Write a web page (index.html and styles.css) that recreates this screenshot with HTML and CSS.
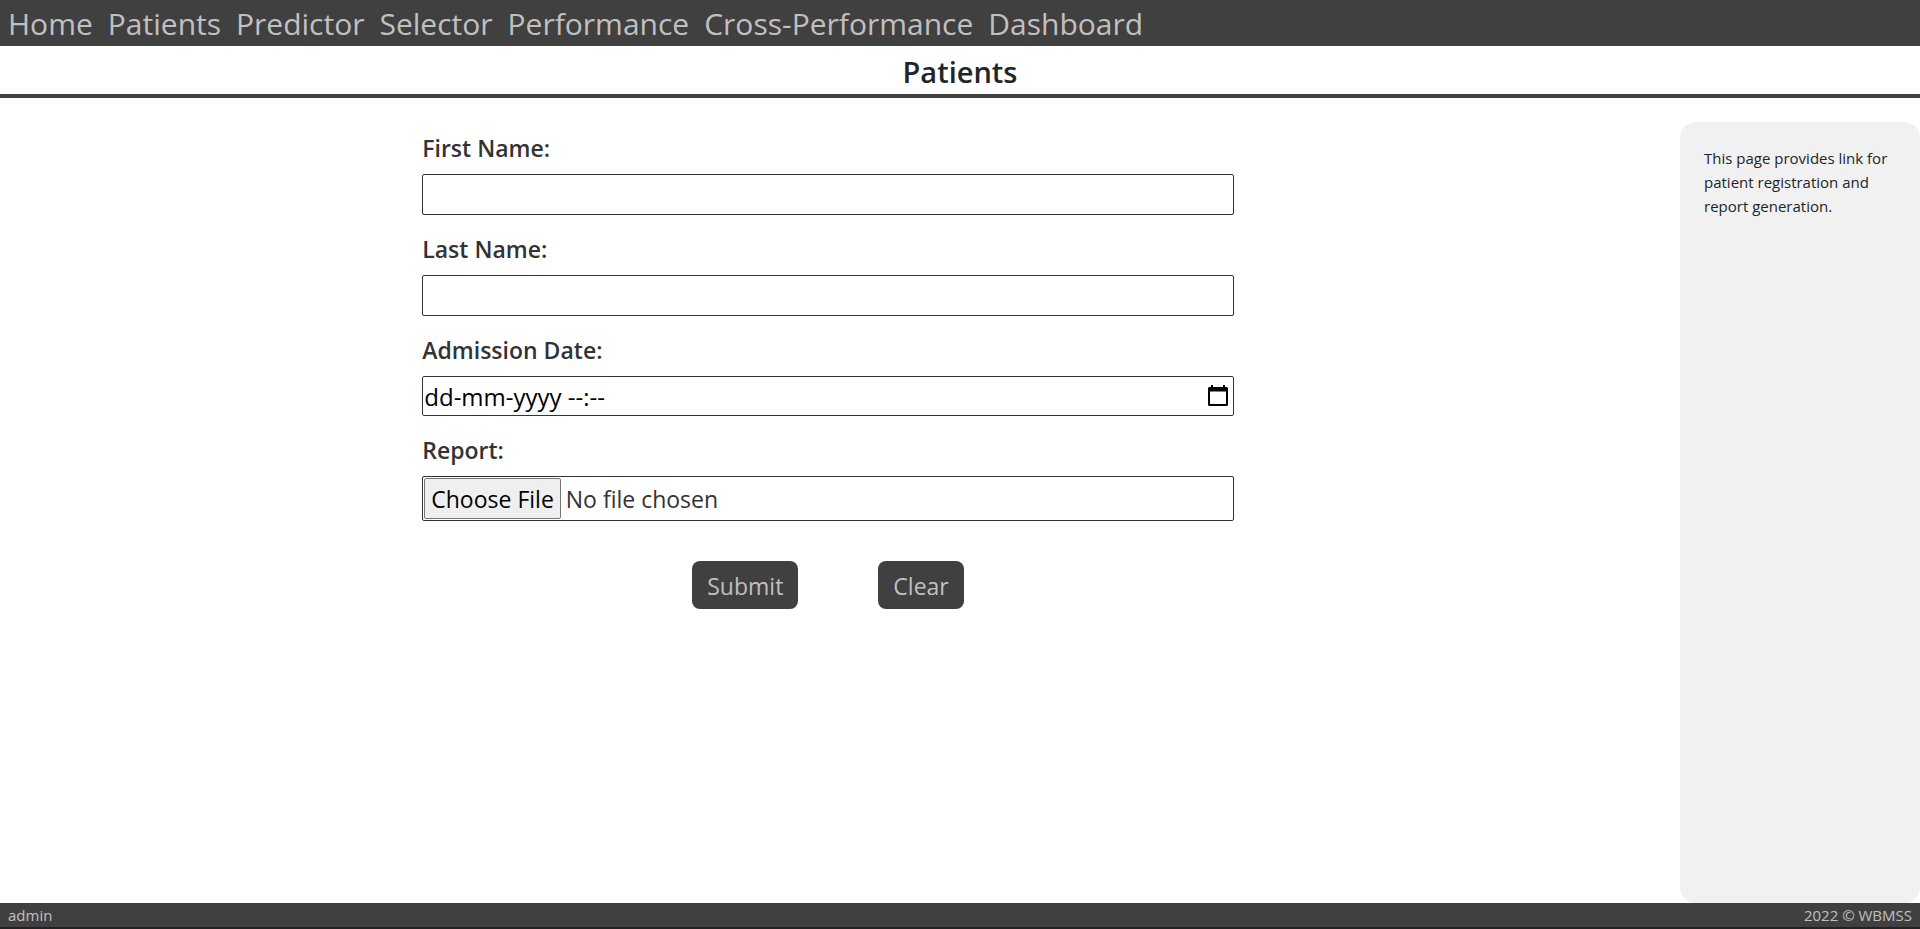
FILE: index.html
```html
<!DOCTYPE html>
<html lang="en">
<head>
<meta charset="utf-8">
<title>Patients</title>
<link rel="stylesheet" href="styles.css">
</head>
<body>
<nav class="navbar">
  <a href="#">Home</a>
  <a href="#">Patients</a>
  <a href="#">Predictor</a>
  <a href="#">Selector</a>
  <a href="#">Performance</a>
  <a href="#">Cross-Performance</a>
  <a href="#">Dashboard</a>
</nav>
<h1 class="page-title">Patients</h1>
<div class="content">
  <main class="main">
    <form class="form">
      <div class="field">
        <label for="first-name">First Name:</label>
        <input class="control" id="first-name" type="text">
      </div>
      <div class="field">
        <label for="last-name">Last Name:</label>
        <input class="control" id="last-name" type="text">
      </div>
      <div class="field">
        <label for="admission">Admission Date:</label>
        <div class="control date">
          <input class="date-input" id="admission" type="text" placeholder="dd-mm-yyyy --:--">
          <button class="date-button" type="button" aria-label="Open calendar">
            <svg width="20" height="22" viewBox="0 0 20 22" aria-hidden="true">
              <path fill-rule="evenodd" d="M3 0h2v2h10V0h2v2h1.500a1.500 1.500 0 0 1 1.500 1.500v16a1.500 1.500 0 0 1-1.500 1.500h-17A1.500 1.500 0 0 1 0 19.500v-16A1.500 1.500 0 0 1 1.500 2H3zM2 6.500V19h16V6.500z"/>
            </svg>
          </button>
        </div>
      </div>
      <div class="field">
        <label for="report">Report:</label>
        <input class="control file" id="report" type="file">
      </div>
      <div class="actions">
        <button class="btn" type="submit">Submit</button>
        <button class="btn" type="reset">Clear</button>
      </div>
    </form>
  </main>
  <aside class="sidebar">This page provides link for patient registration and report generation.</aside>
</div>
<footer class="footer">
  <span>admin</span>
  <span>2022 © WBMSS</span>
</footer>
</body>
</html>
```
FILE: styles.css
```css
* {
  box-sizing: border-box;
}

body {
  margin: 0;
  min-height: 100vh;
  display: flex;
  flex-direction: column;
  font-family: "Open Sans", "Noto Sans", sans-serif;
  font-size: 15px;
  line-height: 24px;
  color: #212529;
  background: #fff;
}

.navbar {
  display: flex;
  gap: 15px;
  padding: 2px 8px 0;
  background: #404040;
  font-size: 30px;
  line-height: 44px;
}

.navbar a {
  color: #c0c0c0;
  text-decoration: none;
}

.page-title {
  margin: 0;
  padding: 6px 0 2px;
  border-bottom: 4px solid #404040;
  font-size: 29px;
  line-height: 40px;
  font-weight: 600;
  text-align: center;
}

.content {
  flex: 1;
  display: flex;
  gap: 24px;
  padding-top: 24px;
}

.main {
  flex: 1;
}

.form {
  width: 49%;
  margin: 0 auto;
  padding-top: 8px;
  display: flex;
  flex-direction: column;
  gap: 16px;
  color: #333;
}

.field {
  display: flex;
  flex-direction: column;
  gap: 8px;
}

.field label {
  font-size: 23px;
  line-height: 36px;
  font-weight: 600;
}

.control {
  width: 100%;
  height: 41px;
  border: 1px solid #333;
  border-radius: 2px;
  padding: 0 2px;
  background: #fff;
  font: inherit;
  font-size: 23px;
}

.date {
  height: 40px;
  display: flex;
  align-items: center;
  padding: 0 5px 0 1px;
}

.date-input {
  flex: 1;
  min-width: 0;
  border: 0;
  padding: 2px 0 0;
  font: inherit;
  font-size: 24px;
  line-height: 36px;
}

.date-input::placeholder {
  color: #000;
  opacity: 1;
}

.date-button {
  display: flex;
  padding: 0;
  border: 0;
  background: none;
}

.file {
  height: 45px;
  padding: 1px;
  line-height: 36px;
  color: #333;
}

.file::file-selector-button {
  height: 41px;
  margin: 0 5px 0 0;
  padding: 0 6px;
  border: 1px solid #767676;
  border-radius: 2px;
  background: #efefef;
  color: #000;
  font: inherit;
}

.actions {
  display: flex;
  justify-content: center;
  gap: 80px;
  padding-top: 24px;
}

.btn {
  height: 48px;
  padding: 2px 15px 0;
  border: 0;
  border-radius: 8px;
  background: #404040;
  color: #c0c0c0;
  font: inherit;
  font-size: 23px;
}

.sidebar {
  width: 240px;
  padding: 24px;
  border-radius: 16px;
  background: #f1f1f1;
}

.footer {
  display: flex;
  justify-content: space-between;
  padding: 0 8px;
  border-bottom: 2px solid #222;
  background: #404040;
  color: #c0c0c0;
}
```
